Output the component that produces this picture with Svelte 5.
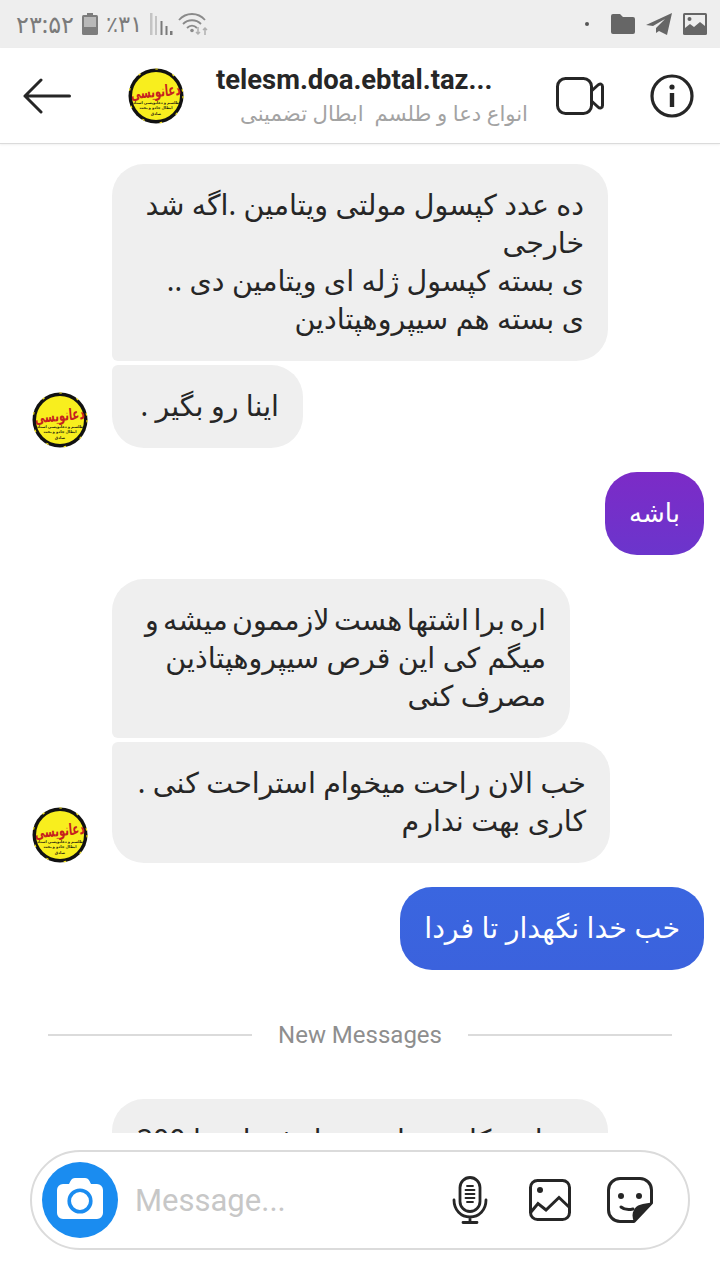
<script>
</script>

{#snippet logo(cls)}
  <svg class={cls} viewBox="0 0 56 56" aria-hidden="true">
    <circle cx="28" cy="28" r="27.500" fill="#111" />
    <circle cx="28" cy="28" r="27" fill="none" stroke="#f3e21b" stroke-width="1.200" stroke-dasharray="2.500 15.500" />
    <circle cx="28" cy="28" r="24" fill="#f8ee1e" />
    <g transform="translate(28 29) rotate(-5) scale(1 1.600)"><text x="0" y="0" class="lt">دعانویسی</text></g>
    <text x="28" y="35.500" class="ls">طلسم و دعانویسی استاد</text>
    <text x="28" y="41" class="ls">ابطال جادو و بخت</text>
    <text x="28" y="47" class="ls">صادق</text>
  </svg>
{/snippet}

<div class="screen">
  <div class="status">
    <div class="status-left">
      <span class="st">۲۳:۵۲</span>
      <svg class="batt" viewBox="0 0 16 22"><rect x="5" y="0" width="6" height="3" fill="#7d7d7d"/><rect x="0" y="2" width="16" height="20" rx="1.500" fill="#7d7d7d"/><rect x="2" y="4" width="12" height="10" fill="#b9b9b9"/></svg>
      <span class="st pct">٪۳۱</span>
      <svg class="sig" viewBox="0 0 24 22"><path d="M0 0h2.500v22H0zM5 3h2v19H5z" fill="#c4c4c4"/><path d="M10.500 8h2v14h-2zM15.500 13h2v9h-2zM20 18h2.500v4H20z" fill="#7a7a7a"/></svg>
      <svg class="wifi" viewBox="0 0 32 24" fill="none" stroke="#8a8a8a" stroke-width="1.800">
        <path d="M1 8c7-8 19-8 26 0M5 12c5-5 13-5 18 0M9 16c3-3 7-3 10 0"/>
        <circle cx="14" cy="18.500" r="1.800" fill="#8a8a8a" stroke="none"/>
        <path d="M20 15v7M18 20l2 2 2-2M27 23v-7M25 18l2-2 2 2" stroke="#b0b0b0" stroke-width="1.500"/>
      </svg>
    </div>
    <div class="status-right">
      <span class="dot"></span>
      <svg class="s-folder" viewBox="0 0 24 20"><path d="M0 2a2 2 0 0 1 2-2h7l3 3h10a2 2 0 0 1 2 2v13a2 2 0 0 1-2 2H2a2 2 0 0 1-2-2z" fill="#666"/></svg>
      <svg class="s-plane" viewBox="0 0 26 22"><path d="M0 12 26 0l-5 22-8-4-3 2v-5l9-9-12 7z" fill="#666"/></svg>
      <svg class="s-img" viewBox="0 0 24 22"><rect width="24" height="22" rx="1.500" fill="#666"/><rect x="2" y="2" width="20" height="15" fill="#eee"/><circle cx="6.500" cy="6" r="2" fill="#666"/><path d="M2 15l5-4 4 3 6-5 5 4v4H2z" fill="#666"/></svg>
    </div>
  </div>

  <header class="bar">
    <svg class="back" viewBox="0 0 48 36" fill="none" stroke="#262626" stroke-width="3" stroke-linecap="round" stroke-linejoin="round"><path d="M46.500 18H2M18 2 2 18l16 16"/></svg>
    {@render logo("head-logo")}
    <div class="title">
      <div class="name">telesm.doa.ebtal.taz...</div>
      <div class="sub" dir="rtl">انواع دعا و طلسم&nbsp; ابطال تضمینی</div>
    </div>
    <svg class="video" viewBox="0 0 48 38" fill="none" stroke="#262626" stroke-width="3" stroke-linejoin="round"><rect x="1.500" y="1.500" width="34" height="35" rx="8"/><path d="M35.500 14 42 8c2-2 4.500-1 4.500 1.500v19c0 2.500-2.500 3.500-4.500 1.500l-6.500-6"/></svg>
    <svg class="info" viewBox="0 0 44 44" fill="none"><circle cx="22" cy="22" r="20" stroke="#262626" stroke-width="3.200"/><circle cx="22" cy="13" r="2.600" fill="#262626"/><rect x="19.800" y="19" width="4.400" height="14" fill="#262626"/></svg>
  </header>

  <main class="thread">
    <div class="group in">
      <div class="bub first" dir="rtl">ده عدد کپسول مولتی ویتامین .اگه شد خارجی<br />ی بسته کپسول ژله ای ویتامین دی ..<br />ی بسته هم سیپروهپتادین</div>
      <div class="last">
        {@render logo("ava")}
        <div class="bub tail short" dir="rtl">اینا رو بگیر .</div>
      </div>
    </div>

    <div class="out purple" dir="rtl">باشه</div>

    <div class="group in">
      <div class="bub first b-narrow" dir="rtl"><span class="tight">اره برا اشتها هست لازممون میشه و</span><br />میگم کی این قرص سیپروهپتاذین<br />مصرف کنی</div>
      <div class="last">
        {@render logo("ava")}
        <div class="bub tail wide" dir="rtl">خب الان راحت میخوام استراحت کنی .<br />کاری بهت ندارم</div>
      </div>
    </div>

    <div class="out blue" dir="rtl">خب خدا نگهدار تا فردا</div>

    <div class="sep"><span>New Messages</span></div>

    <div class="group in">
      <div class="bub cut" dir="rtl">ضمانت کارت ملی و پول فقط و تا 200</div>
    </div>
  </main>

  <footer class="composer">
    <div class="pill">
      <span class="cam">
        <svg viewBox="0 0 46 41"><path d="M6 6h6l1.500-3C14.500 1 16 0 18 0h10c2 0 3.500 1 4.500 3L34 6h6a6 6 0 0 1 6 6v23a6 6 0 0 1-6 6H6a6 6 0 0 1-6-6V12a6 6 0 0 1 6-6z" fill="#fff"/><circle cx="23" cy="23" r="10.800" fill="none" stroke="#1a8cf0" stroke-width="3.600"/></svg>
      </span>
      <span class="ph">Message...</span>
      <div class="tools">
        <svg class="mic" viewBox="0 0 36 48" fill="none" stroke="#262626" stroke-width="2.800" stroke-linecap="round"><rect x="8" y="1.500" width="20" height="34" rx="10"/><path d="M2 24c0 10 7 17 16 17s16-7 16-17M18 41v4M11 46.500h14"/><path d="M15 10h6M13.500 14h9M13.500 18h9M13.500 22h9M15 26h6" stroke-width="1.800"/></svg>
        <svg class="gal" viewBox="0 0 42 42" fill="none" stroke="#262626" stroke-width="3"><rect x="1.500" y="1.500" width="39" height="39" rx="7"/><circle cx="11" cy="11" r="3" fill="#262626" stroke="none"/><path d="M2 33 9 24.500 17 31 30 18.500 40 28"/></svg>
        <svg class="stick" viewBox="0 0 46 46" fill="none"><path d="M27 44.500H13A11.500 11.500 0 0 1 1.500 33V13A11.500 11.500 0 0 1 13 1.500h20A11.500 11.500 0 0 1 44.500 13v13z" stroke="#262626" stroke-width="3" stroke-linejoin="round"/><path d="M45 26 27 45c-2-5-2-9 0-12 2-5 9-7 18-7z" fill="#262626"/><circle cx="14" cy="19" r="3" fill="#262626"/><circle cx="32" cy="19" r="3" fill="#262626"/><path d="M14 30c3 2.500 8 3 12 2" stroke="#262626" stroke-width="3" stroke-linecap="round"/></svg>
      </div>
    </div>
  </footer>
</div>

<style>
  :global(body) { margin: 0; background: #fff; }
  .screen {
    width: 720px; height: 1280px; display: flex; flex-direction: column; overflow: hidden;
    font-family: Roboto, "Noto Sans", sans-serif; background: #fff;
  }
  .status {
    height: 48px; flex: none; background: #eeeeee; display: flex; justify-content: space-between;
    align-items: center; padding: 0 13px 0 16px; box-sizing: border-box;
  }
  .status-left, .status-right { display: flex; align-items: center; }
  .st { font-family: "Noto Sans", "DejaVu Sans", sans-serif; font-size: 24px; color: #7b7b7b; line-height: 1; }
  .pct { font-size: 22.500px; }
  .batt { width: 16px; height: 22px; margin: 0 8px 0 8px; }
  .sig { width: 24px; height: 22px; margin-left: 8px; }
  .wifi { width: 32px; height: 24px; margin-left: 4px; }
  .dot { width: 4px; height: 4px; background: #555; border-radius: 50%; margin-right: 22px; }
  .s-folder { width: 24px; height: 20px; margin-right: 11px; }
  .s-plane { width: 26px; height: 22px; margin-right: 11px; }
  .s-img { width: 24px; height: 22px; }

  .bar {
    height: 96px; flex: none; display: flex; align-items: center; box-sizing: border-box;
    border-bottom: 1px solid #dbdbdb; box-shadow: 0 1px 2px rgba(0,0,0,.06); position: relative; background: #fff;
  }
  .back { width: 48px; height: 36px; margin-left: 23px; flex: none; }
  :global(.head-logo) { width: 56px; height: 56px; margin-left: 57px; flex: none; }
  .title { width: 312px; margin-left: 32px; flex: none; }
  .name { font-size: 27.400px; font-weight: 700; color: #262626; line-height: 30px; white-space: nowrap; }
  .sub { font-family: "Noto Sans", "DejaVu Sans", sans-serif; font-size: 21.200px; color: #a3a3a3; line-height: 28px; margin-top: 4px; white-space: nowrap; }
  .video { width: 48px; height: 38px; margin-left: 28px; flex: none; }
  .info { width: 44px; height: 44px; margin-left: 46px; flex: none; }

  .thread { flex: 1; min-height: 0; overflow: hidden; padding-top: 20px; display: flex; flex-direction: column; box-sizing: border-box; }
  .bub, .out {
    font-family: "Noto Sans", "DejaVu Sans", sans-serif; font-size: 28.500px; line-height: 38px; color: #262626;
    box-sizing: border-box;
  }
  .group { display: flex; flex-direction: column; gap: 4px; padding-left: 112px; align-items: flex-start; flex: none; }
  .bub { background: #efefef; border-radius: 32px; padding: 20.500px 24px 24.500px; max-width: 496px; }
  .first { border-bottom-left-radius: 6px; }
  .tail { border-top-left-radius: 6px; max-width: 520px; white-space: nowrap; }
  .short { width: 191px; }
  .wide { width: 498px; }
  .last { position: relative; }
  :global(.ava) { position: absolute; left: -80px; bottom: 0; width: 56px; height: 56px; }
  .b-narrow { width: 458px; white-space: nowrap; }
  .tight { word-spacing: -3px; }
  .out { align-self: flex-end; margin: 24px 16px 24px 0; color: #fff; border-radius: 32px; padding: 20.500px 24px 24.500px; flex: none; }
  .purple { background: linear-gradient(180deg, #7c2bc7, #6b35cc); font-size: 26px; }
  .blue { background: linear-gradient(180deg, #3a66e0, #3b62dd); margin-bottom: 0; }
  .sep {
    margin: 45px 48px 0; display: flex; align-items: center; gap: 26px; color: #8e8e8e; font-size: 24px; line-height: 40px; flex: none;
  }
  .sep::before, .sep::after { content: ""; flex: 1; height: 2px; background: #dbdbdb; }
  .cut { margin-top: 44px; width: 496px; white-space: nowrap; }

  .composer { height: 147px; flex: none; background: #fff; box-sizing: border-box; padding: 17px 30px 0; position: relative; }
  .pill {
    height: 100px; box-sizing: border-box; border: 2px solid #dbdbdb; border-radius: 50px; display: flex; align-items: center;
    padding-left: 10px; padding-right: 35px;
  }
  .cam { width: 76px; height: 76px; border-radius: 50%; background: #1a8cf0; display: flex; align-items: center; justify-content: center; flex: none; }
  .cam svg { width: 46px; height: 41px; margin-top: -4px; }
  .ph { margin-left: 17px; font-size: 31px; color: #c7c7c7; flex: 1; }
  .tools { display: flex; align-items: center; gap: 36px; }
  .mic { width: 36px; height: 48px; }
  .gal { width: 42px; height: 42px; margin-left: 5px; }
  .stick { width: 46px; height: 46px; }
  :global(.lt) { font-family: "Noto Sans", "DejaVu Sans", sans-serif; font-size: 10px; font-weight: 700; fill: #c6201f; text-anchor: middle; }
  :global(.ls) { font-family: "Noto Sans", "DejaVu Sans", sans-serif; font-size: 3.800px; font-weight: 700; fill: #2b2610; text-anchor: middle; }
</style>
